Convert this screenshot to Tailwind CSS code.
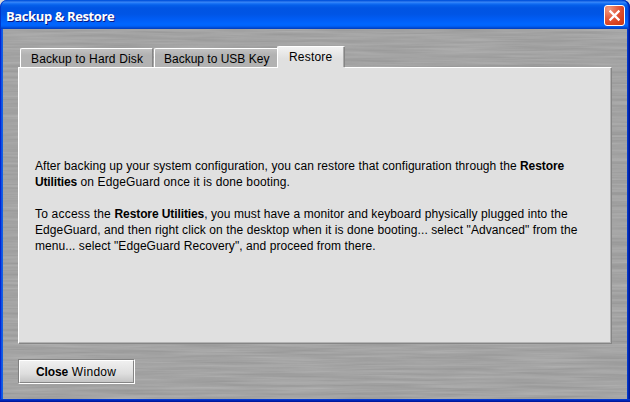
<!DOCTYPE html>
<html lang="en">
<head>
<meta charset="utf-8">
<title>Backup &amp; Restore</title>
<script src="https://cdn.jsdelivr.net/npm/@tailwindcss/browser@4"></script>
</head>
<body class="w-[630px] h-[402px] overflow-hidden bg-[#d8d8d8] font-['Liberation_Sans',Arial,sans-serif] text-[12px] text-black">
<div class="flex h-[402px] w-[630px] flex-col overflow-hidden rounded-t-[7px] bg-[linear-gradient(90deg,#0019cf_0px,#0831d9_1px,#166aee_2px,#0855dd_3px,#0855dd_627px,#0441d8_627px,#001ea0_629px,#00138c_630px)]">
  <header class="flex h-[29px] shrink-0 items-center justify-between rounded-t-[7px] bg-[linear-gradient(180deg,#0058e0_0px,#0a54dc_1px,#3f8cf7_2px,#2078f8_3px,#0560ea_5px,#0054e3_8px,#0055e5_14px,#005cf4_19px,#0066ff_24px,#0062f8_26px,#0047d0_28px,#003dbc_29px)] pl-[6px] pr-[5px] shadow-[inset_1px_0_0_#0036c8,inset_-1px_0_0_#0020a8,inset_-2px_0_0_#0038cc]">
    <h1 class="pt-[2px] font-['Open_Sans','Noto_Sans',sans-serif] text-[13px] leading-[18px] font-bold tracking-[-0.4px] whitespace-nowrap text-white [text-shadow:1px_1px_0_#0a1883]">Backup &amp; Restore</h1>
    <button class="mt-[2px] flex size-[21px] items-center justify-center rounded-[3px] border border-white bg-[radial-gradient(circle_at_20%_15%,#f09a80_0%,#e2573a_45%,#d8401c_75%,#c23a18_100%)]" aria-label="Close">
      <svg width="19" height="19" viewBox="0 0 19 19" fill="none" stroke="#fff" stroke-width="2.2"><path d="M4.6 4.6 14.4 14.4M14.4 4.6 4.6 14.4"/></svg>
    </button>
  </header>
  <main class="relative mx-[3px] h-[370px] shrink-0 overflow-hidden bg-[#a3a3a3]">
    <svg class="absolute inset-0" width="624" height="370" aria-hidden="true">
      <filter id="brushed" x="0" y="0" width="100%" height="100%" color-interpolation-filters="sRGB">
        <feTurbulence type="fractalNoise" baseFrequency="0.012 0.36" numOctaves="3" seed="7"/>
        <feColorMatrix values="0.13 0 0 0 0.575  0.13 0 0 0 0.575  0.13 0 0 0 0.575  0 0 0 0 1"/>
      </filter>
      <rect width="624" height="370" filter="url(#brushed)"/>
    </svg>
    <div class="relative flex h-full flex-col pl-[15px] pt-[17px]">
      <nav class="flex h-[21px] items-end pl-[2px]">
        <div class="flex h-[19px] w-[133px] rounded-tl-[2px] border-t border-r border-l border-t-white border-r-[#858585] border-l-white bg-[linear-gradient(180deg,#c2c2c2,#b2b2b2_6px)] pl-[10px] pt-[3px]"><span class="leading-[14px] whitespace-nowrap tracking-[0.14px]">Backup to Hard Disk</span></div>
        <div class="ml-px flex h-[19px] w-[123px] rounded-tl-[2px] border-t border-l border-white bg-[linear-gradient(180deg,#c2c2c2,#b2b2b2_6px)] pl-[9px] pt-[3px]"><span class="leading-[14px] whitespace-nowrap">Backup to USB Key</span></div>
        <div class="relative z-10 -mb-px flex h-[22px] w-[68px] self-start rounded-t-[2px] border-t border-l border-white bg-[linear-gradient(180deg,#f2f2f2,#e0e0e0_12px)] pl-[11px] pt-[3px]"><span class="leading-[14px] whitespace-nowrap tracking-[0.2px]">Restore</span><i class="absolute top-0 right-0 h-[20px] w-[2px] border-r border-[#858585] bg-[#aaaaaa]"></i></div>
      </nav>
      <section class="h-[277px] w-[594px] border border-t-white border-r-[#858585] border-b-[#858585] border-l-white bg-[#e0e0e0] pl-[16px] pt-[90px] leading-[16px] whitespace-nowrap shadow-[inset_-1px_-1px_0_#b4b4b4]">
        <p class="tracking-[0.067px]">After backing up your system configuration, you can restore that configuration through the <b class="tracking-[-0.1px]">Restore</b></p>
        <p class="tracking-[0.13px]"><b class="tracking-[-0.15px]">Utilities</b> on EdgeGuard once it is done booting.</p>
        <p class="mt-[16px] tracking-[0.08px]"><span class="tracking-[0.2px]">To access the </span><b class="tracking-[-0.1px]">Restore Utilities</b>, you must have a monitor and keyboard physically plugged into the</p>
        <p class="tracking-[0.09px]">EdgeGuard, and then right click on the desktop when it is done booting... select "Advanced" from the</p>
        <p class="tracking-[0.065px]">menu... select "EdgeGuard Recovery", and proceed from there.</p>
      </section>
      <button class="mt-[15px] h-[25px] w-[117px] border border-t-[#808080] border-r-white border-b-white border-l-[#808080] bg-[#858585]">
        <span class="flex h-[23px] w-[115px] border border-t-white border-r-[#858585] border-b-[#858585] border-l-white bg-[linear-gradient(180deg,#f0f0f0,#dedede_60%,#c4c4c4)] pl-[16px] pt-[4px] leading-[14px] whitespace-pre"><b class="tracking-[-0.1px]">Close</b><span class="tracking-[0.3px]"> Window</span></span>
      </button>
    </div>
  </main>
  <footer class="h-[3px] shrink-0 bg-[linear-gradient(180deg,#0441d8,#0025b8_50%,#00138c)]"></footer>
</div>
</body>
</html>
